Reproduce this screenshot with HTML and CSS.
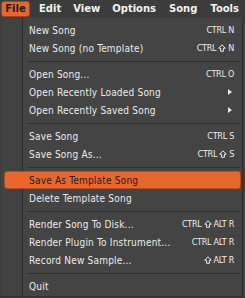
FILE: index.html
```html
<!DOCTYPE html>
<html>
<head>
<meta charset="utf-8">
<link rel="stylesheet" href="styles.css">
</head>
<body>
<div class="menubar">
  <span class="mb-item active">File</span>
  <span class="mb-item">Edit</span>
  <span class="mb-item">View</span>
  <span class="mb-item">Options</span>
  <span class="mb-item wide">Song</span>
  <span class="mb-item wide">Tools</span>
</div>
<div class="menu">
  <div class="item"><span class="label">New Song</span><span class="sc">CTRL N</span></div>
  <div class="item"><span class="label">New Song (no Template)</span><span class="sc">CTRL<svg class="shift" viewBox="0 0 8 8"><path d="M4 0.8 L7.3 4.2 H5.4 V7.3 H2.6 V4.2 H0.7 Z"/></svg>N</span></div>
  <div class="sep"></div>
  <div class="item"><span class="label">Open Song...</span><span class="sc">CTRL O</span></div>
  <div class="item"><span class="label">Open Recently Loaded Song</span><span class="arrow"></span></div>
  <div class="item"><span class="label">Open Recently Saved Song</span><span class="arrow"></span></div>
  <div class="sep"></div>
  <div class="item"><span class="label">Save Song</span><span class="sc">CTRL S</span></div>
  <div class="item"><span class="label">Save Song As...</span><span class="sc">CTRL<svg class="shift" viewBox="0 0 8 8"><path d="M4 0.8 L7.3 4.2 H5.4 V7.3 H2.6 V4.2 H0.7 Z"/></svg>S</span></div>
  <div class="sep"></div>
  <div class="item hl"><span class="label">Save As Template Song</span></div>
  <div class="item"><span class="label">Delete Template Song</span></div>
  <div class="sep"></div>
  <div class="item"><span class="label">Render Song To Disk...</span><span class="sc">CTRL<svg class="shift" viewBox="0 0 8 8"><path d="M4 0.8 L7.3 4.2 H5.4 V7.3 H2.6 V4.2 H0.7 Z"/></svg>ALT R</span></div>
  <div class="item"><span class="label">Render Plugin To Instrument...</span><span class="sc">CTRL ALT R</span></div>
  <div class="item"><span class="label">Record New Sample...</span><span class="sc"><svg class="shift" viewBox="0 0 8 8"><path d="M4 0.8 L7.3 4.2 H5.4 V7.3 H2.6 V4.2 H0.7 Z"/></svg>ALT R</span></div>
  <div class="sep"></div>
  <div class="item"><span class="label">Quit</span></div>
</div>
</body>
</html>
```

FILE: styles.css
```css
html, body {
  margin: 0;
  padding: 0;
  background: #3e3e3e;
  width: 245px;
  height: 298px;
  overflow: hidden;
}
.menubar {
  height: 18px;
  display: flex;
  align-items: center;
  background: #3c3c3c;
  padding-left: 1px;
  white-space: nowrap;
}
.mb-item {
  font-family: "DejaVu Sans", sans-serif;
  font-weight: bold;
  font-size: 10px;
  color: #f2f2f2;
  padding: 0 6px;
  height: 16px;
  line-height: 16px;
  box-sizing: border-box;
  flex: none;
}
.mb-item.wide {
  padding-left: 7px;
}
.mb-item.active {
  background: #e8672f;
  border: 1px solid #a8441a;
  border-radius: 3px;
  color: #202020;
  line-height: 14px;
  width: 29px;
  padding: 0;
  text-align: center;
  margin-right: 3px;
}
.menu {
  margin-left: 1px;
  width: 242px;
  height: 279px;
  box-sizing: border-box;
  background: linear-gradient(to right, #424242 0 21px, #2e2e2e 21px 22px, #444444 22px);
  border-right: 1px solid #303030;
  border-bottom: 1px solid #303030;
  padding: 3px 0 0 0;
  display: flex;
  flex-direction: column;
}
.item {
  height: 18px;
  display: flex;
  align-items: center;
  justify-content: space-between;
  padding: 0 8px 0 28px;
  font-family: "DejaVu Sans Condensed", "DejaVu Sans", sans-serif;
  font-stretch: condensed;
  font-size: 10px;
  letter-spacing: 0.2px;
  color: #ececec;
  box-sizing: border-box;
  flex: none;
  white-space: nowrap;
}
.item.hl {
  margin: 0 1px 0 3px;
  padding-left: 24px;
  background: #e8672f;
  border: 1px solid #b24c1f;
  border-radius: 3px;
  color: #1e1e1e;
}
.sc {
  display: flex;
  align-items: center;
  font-family: "DejaVu Sans Condensed", "DejaVu Sans", sans-serif;
  font-stretch: condensed;
  font-size: 9px;
  letter-spacing: -0.3px;
  color: #ececec;
}
.shift {
  width: 8px;
  height: 8px;
  margin: 0 2px 0 2px;
  fill: none;
  stroke: #ececec;
  stroke-width: 1;
}
.arrow {
  width: 0;
  height: 0;
  border-top: 3px solid transparent;
  border-bottom: 3px solid transparent;
  border-left: 4px solid #e8e8e8;
  margin-right: 2px;
}
.sep {
  height: 8px;
  flex: none;
  margin-left: 26px;
  margin-right: 2px;
  display: flex;
  align-items: center;
}
.sep::before {
  content: "";
  display: block;
  width: 100%;
  height: 1px;
  background: #2e2e2e;
}
```
